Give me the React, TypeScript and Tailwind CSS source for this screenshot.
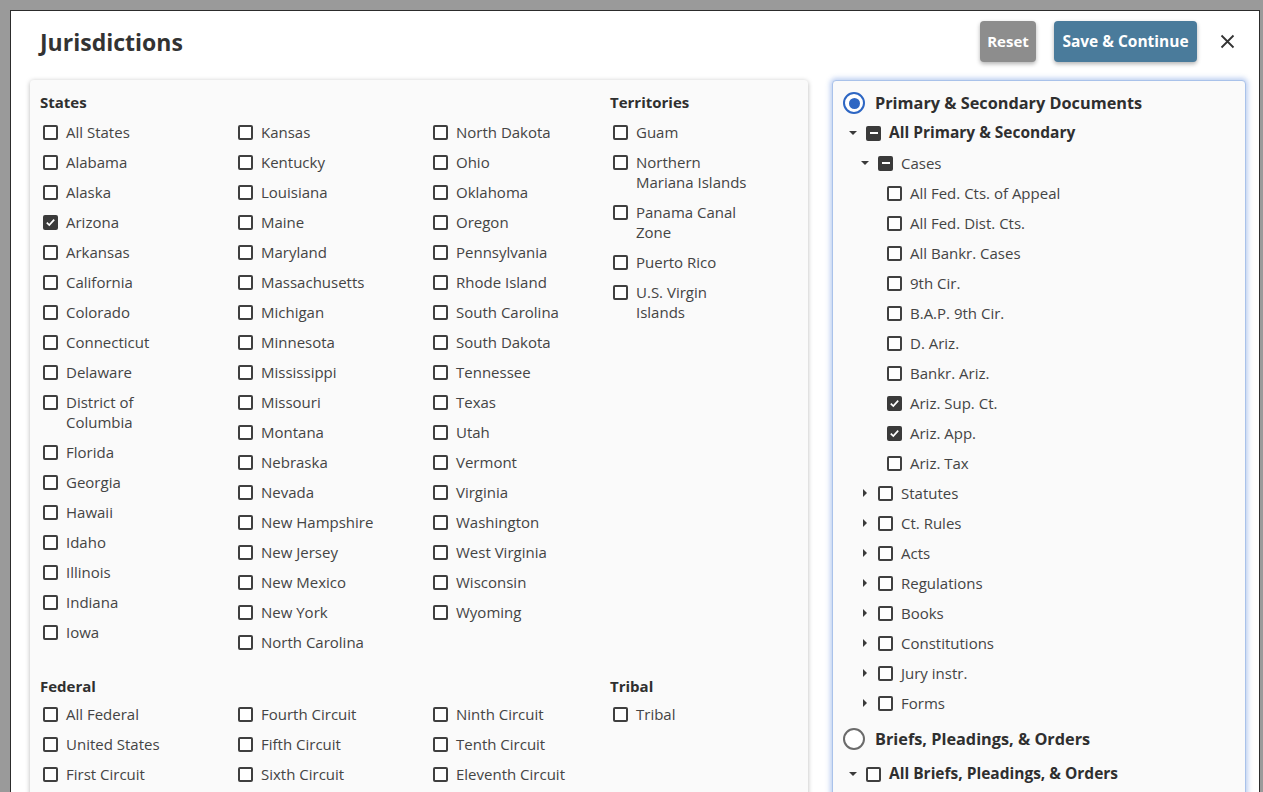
import React from "react";

type BoxState = "empty" | "checked" | "mixed";

type Entry = { label: string; checked?: boolean };

const stateCols: Entry[][] = [
  [
    { label: "All States" },
    { label: "Alabama" },
    { label: "Alaska" },
    { label: "Arizona", checked: true },
    { label: "Arkansas" },
    { label: "California" },
    { label: "Colorado" },
    { label: "Connecticut" },
    { label: "Delaware" },
    { label: "District of\nColumbia" },
    { label: "Florida" },
    { label: "Georgia" },
    { label: "Hawaii" },
    { label: "Idaho" },
    { label: "Illinois" },
    { label: "Indiana" },
    { label: "Iowa" },
  ],
  [
    { label: "Kansas" },
    { label: "Kentucky" },
    { label: "Louisiana" },
    { label: "Maine" },
    { label: "Maryland" },
    { label: "Massachusetts" },
    { label: "Michigan" },
    { label: "Minnesota" },
    { label: "Mississippi" },
    { label: "Missouri" },
    { label: "Montana" },
    { label: "Nebraska" },
    { label: "Nevada" },
    { label: "New Hampshire" },
    { label: "New Jersey" },
    { label: "New Mexico" },
    { label: "New York" },
    { label: "North Carolina" },
  ],
  [
    { label: "North Dakota" },
    { label: "Ohio" },
    { label: "Oklahoma" },
    { label: "Oregon" },
    { label: "Pennsylvania" },
    { label: "Rhode Island" },
    { label: "South Carolina" },
    { label: "South Dakota" },
    { label: "Tennessee" },
    { label: "Texas" },
    { label: "Utah" },
    { label: "Vermont" },
    { label: "Virginia" },
    { label: "Washington" },
    { label: "West Virginia" },
    { label: "Wisconsin" },
    { label: "Wyoming" },
  ],
  [
    { label: "Guam" },
    { label: "Northern\nMariana Islands" },
    { label: "Panama Canal\nZone" },
    { label: "Puerto Rico" },
    { label: "U.S. Virgin\nIslands" },
  ],
];

const federalCols: Entry[][] = [
  [
    { label: "All Federal" },
    { label: "United States" },
    { label: "First Circuit" },
    { label: "Second Circuit" },
    { label: "Third Circuit" },
  ],
  [
    { label: "Fourth Circuit" },
    { label: "Fifth Circuit" },
    { label: "Sixth Circuit" },
    { label: "Seventh Circuit" },
    { label: "Eighth Circuit" },
  ],
  [
    { label: "Ninth Circuit" },
    { label: "Tenth Circuit" },
    { label: "Eleventh Circuit" },
    { label: "D.C. Circuit" },
    { label: "Federal Circuit" },
  ],
  [{ label: "Tribal" }],
];

type TreeRow = {
  label: string;
  level: number;
  caret?: "down" | "right";
  box: BoxState;
  bold?: boolean;
};

const primaryTree: TreeRow[] = [
  { label: "All Primary & Secondary", level: 0, caret: "down", box: "mixed", bold: true },
  { label: "Cases", level: 1, caret: "down", box: "mixed" },
  { label: "All Fed. Cts. of Appeal", level: 2, box: "empty" },
  { label: "All Fed. Dist. Cts.", level: 2, box: "empty" },
  { label: "All Bankr. Cases", level: 2, box: "empty" },
  { label: "9th Cir.", level: 2, box: "empty" },
  { label: "B.A.P. 9th Cir.", level: 2, box: "empty" },
  { label: "D. Ariz.", level: 2, box: "empty" },
  { label: "Bankr. Ariz.", level: 2, box: "empty" },
  { label: "Ariz. Sup. Ct.", level: 2, box: "checked" },
  { label: "Ariz. App.", level: 2, box: "checked" },
  { label: "Ariz. Tax", level: 2, box: "empty" },
  { label: "Statutes", level: 1, caret: "right", box: "empty" },
  { label: "Ct. Rules", level: 1, caret: "right", box: "empty" },
  { label: "Acts", level: 1, caret: "right", box: "empty" },
  { label: "Regulations", level: 1, caret: "right", box: "empty" },
  { label: "Books", level: 1, caret: "right", box: "empty" },
  { label: "Constitutions", level: 1, caret: "right", box: "empty" },
  { label: "Jury instr.", level: 1, caret: "right", box: "empty" },
  { label: "Forms", level: 1, caret: "right", box: "empty" },
];

const briefsTree: TreeRow[] = [
  { label: "All Briefs, Pleadings, & Orders", level: 0, caret: "down", box: "empty", bold: true },
  { label: "Briefs", level: 1, caret: "right", box: "empty" },
  { label: "Pleadings", level: 1, caret: "right", box: "empty" },
];

function Box({ state }: { state: BoxState }) {
  if (state === "empty") {
    return (
      <span className="block h-[15px] w-[15px] shrink-0 rounded-[2px] border-2 border-[#3f3f3f] bg-white" />
    );
  }
  return (
    <span className="flex h-[15px] w-[15px] shrink-0 items-center justify-center rounded-[2px] bg-[#3a3a3a]">
      {state === "checked" ? (
        <svg width="11" height="11" viewBox="0 0 11 11">
          <path d="M1.8 5.6 L4.3 8.1 L9.2 2.6" fill="none" stroke="#fff" strokeWidth="1.7" />
        </svg>
      ) : (
        <span className="block h-[2px] w-[8px] bg-white" />
      )}
    </span>
  );
}

function Caret({ dir }: { dir?: "down" | "right" }) {
  return (
    <span className="flex w-[17px] shrink-0 items-center">
      {dir === "down" && (
        <svg width="8" height="6" viewBox="0 0 8 6">
          <path d="M0 1 L8 1 L4 5 Z" fill="#3a3a3a" />
        </svg>
      )}
      {dir === "right" && (
        <svg width="6" height="8" viewBox="0 0 6 8" className="ml-[1px]">
          <path d="M1 0 L5 4 L1 8 Z" fill="#3a3a3a" />
        </svg>
      )}
    </span>
  );
}

function Radio({ on }: { on?: boolean }) {
  return on ? (
    <span className="flex h-[22px] w-[22px] shrink-0 items-center justify-center rounded-full border-2 border-[#2d66c3] bg-white">
      <span className="block h-[11px] w-[11px] rounded-full bg-[#2d66c3]" />
    </span>
  ) : (
    <span className="block h-[22px] w-[22px] shrink-0 rounded-full border-2 border-[#6b6b6b] bg-white" />
  );
}

function CheckList({ items }: { items: Entry[] }) {
  return (
    <ul className="flex flex-col gap-[10px]">
      {items.map((it) => (
        <li key={it.label} className="flex items-start gap-[8px] pl-[3px]">
          <span className="mt-[3px]">
            <Box state={it.checked ? "checked" : "empty"} />
          </span>
          <span className="whitespace-pre-line leading-5">{it.label}</span>
        </li>
      ))}
    </ul>
  );
}

function Section({
  headers,
  cols,
  headGap,
}: {
  headers: string[];
  cols: Entry[][];
  headGap: string;
}) {
  return (
    <div className={`grid grid-cols-[195px_195px_180px_1fr] ${headGap}`}>
      {headers.map((h, i) => (
        <div key={i} className="h-5 font-bold leading-5 text-[#2f2f2f]">
          {h}
        </div>
      ))}
      {cols.map((col, i) => (
        <CheckList key={i} items={col} />
      ))}
    </div>
  );
}

function TreeLine({ row }: { row: TreeRow }) {
  const indent = ["pl-[16px]", "pl-[28px]", "pl-[37px]"][row.level];
  return (
    <div className={`flex h-[30px] items-center ${indent}`}>
      <Caret dir={row.caret} />
      <Box state={row.box} />
      <span className={`ml-[8px] ${row.bold ? "text-[15.5px] font-bold text-[#2f2f2f]" : ""}`}>{row.label}</span>
    </div>
  );
}

export default function App() {
  return (
    <div className="h-screen overflow-hidden bg-[#9a9a9a] pl-[10px] pr-[3px] pt-[10px] font-['Open_Sans',sans-serif] text-[15px] text-[#444]">
      <div className="border border-[#2c2c2c] bg-white">
        {/* Header */}
        <div className="flex items-center pl-[29px] pr-[24px] pt-[10px]">
          <h1 className="pt-[2px] text-[23px] font-bold text-[#333]">Jurisdictions</h1>
          <button
            type="button"
            className="ml-auto h-[41px] w-[56px] rounded-[4px] bg-[#8d8d8d] text-[15px] font-bold text-white shadow-[0_2px_4px_rgba(0,0,0,0.3)]"
          >
            Reset
          </button>
          <button
            type="button"
            className="ml-[18px] h-[41px] w-[143px] rounded-[4px] bg-[#4a7b9b] text-[15.5px] font-bold text-white shadow-[0_2px_4px_rgba(0,0,0,0.3)]"
          >
            Save &amp; Continue
          </button>
          <button type="button" aria-label="Close" className="ml-[22px] flex h-[16px] w-[16px] items-center justify-center">
            <svg width="15" height="15" viewBox="0 0 15 15">
              <path d="M1.5 1.5 L13.5 13.5 M13.5 1.5 L1.5 13.5" stroke="#333" strokeWidth="1.8" />
            </svg>
          </button>
        </div>

        {/* Panels */}
        <div className="mt-[18px] flex gap-[24px] pl-[19px] pr-[13px]">
          <div className="h-[820px] w-[778px] shrink-0 rounded-[4px] bg-[#fafafa] pl-[10px] pt-[12px] shadow-[0_1px_5px_rgba(0,0,0,0.28)]">
            <Section headers={["States", "", "", "Territories"]} cols={stateCols} headGap="gap-y-[10px]" />
            <div className="mt-[24px]">
              <Section headers={["Federal", "", "", "Tribal"]} cols={federalCols} headGap="gap-y-[8px]" />
            </div>
          </div>

          <div className="h-[820px] flex-1 rounded-[4px] border border-[#a9c2ea] bg-[#fafafa] pt-[7px] shadow-[0_0_5px_2px_rgba(110,150,225,0.45)]">
            <div className="flex h-[30px] items-center gap-[10px] pl-[10px]">
              <Radio on />
              <span className="text-[16.3px] font-bold text-[#2f2f2f]">Primary &amp; Secondary Documents</span>
            </div>
            {primaryTree.map((r) => (
              <TreeLine key={r.label} row={r} />
            ))}
            <div className="mt-[6px] flex h-[30px] items-center gap-[10px] pl-[10px]">
              <Radio />
              <span className="text-[16.3px] font-bold text-[#2f2f2f]">Briefs, Pleadings, &amp; Orders</span>
            </div>
            <div className="mt-[5px]">
              {briefsTree.map((r) => (
                <TreeLine key={r.label} row={r} />
              ))}
            </div>
          </div>
        </div>
      </div>
    </div>
  );
}
